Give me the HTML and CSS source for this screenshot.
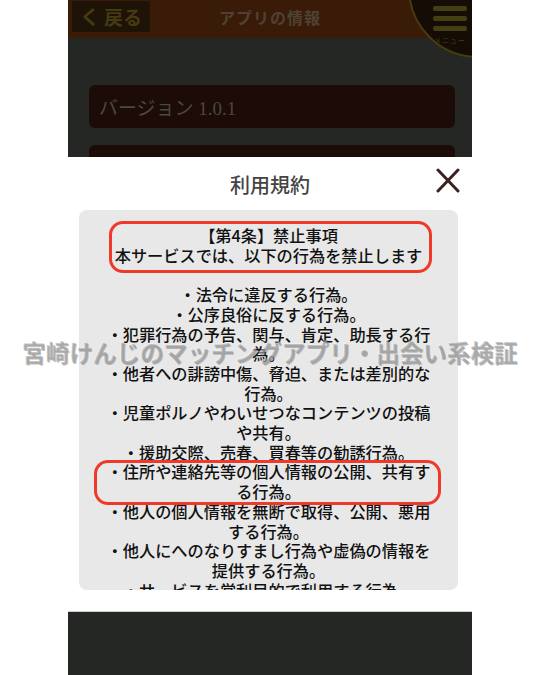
FILE: index.html
```html
<!DOCTYPE html>
<html lang="ja">
<head>
<meta charset="utf-8">
<title>利用規約</title>
<link rel="stylesheet" href="styles.css">
</head>
<body>
<div class="phone">
  <header class="appbar">
    <div class="back"><span class="chev">く</span><span>戻る</span></div>
    <div class="apptitle">アプリの情報</div>
    <div class="spacer"></div>
    <div class="menu">
      <span class="bar"></span>
      <span class="bar"></span>
      <span class="bar"></span>
      <span class="menu-label">メニュー</span>
    </div>
  </header>
  <main class="content">
    <div class="row">バージョン 1.0.1</div>
    <div class="row row-tall"></div>
  </main>

  <div class="modal">
    <div class="modal-head">
      <h2 class="modal-title">利用規約</h2>
      <button class="close" aria-label="閉じる">
        <svg width="24" height="25" viewBox="0 0 24 25"><path d="M2 2 L22 23 M22 2 L2 23" stroke="#3a2222" stroke-width="3" stroke-linecap="round" fill="none"/></svg>
      </button>
    </div>
    <div class="terms">
      <p class="lines">【第4条】禁止事項<br>本サービスでは、以下の行為を禁止します<br>&nbsp;<br>・法令に違反する行為。<br>・公序良俗に反する行為。<br>・犯罪行為の予告、関与、肯定、助長する行<br>為。<br>・他者への誹謗中傷、脅迫、または差別的な<br>行為。<br>・児童ポルノやわいせつなコンテンツの投稿<br>や共有。<br>・援助交際、売春、買春等の勧誘行為。<br>・住所や連絡先等の個人情報の公開、共有す<br>る行為。<br>・他人の個人情報を無断で取得、公開、悪用<br>する行為。<br>・他人にへのなりすまし行為や虚偽の情報を<br>提供する行為。<br>・サービスを営利目的で利用する行為。</p>
      <div class="mark mark-1"></div>
      <div class="mark mark-2"></div>
    </div>
  </div>
</div>
<div class="watermark">宮崎けんじのマッチングアプリ・出会い系検証</div>
</body>
</html>
```

FILE: styles.css
```css
* { box-sizing: border-box; }
html, body { margin: 0; padding: 0; }
body {
  background: #ffffff;
  width: 540px;
  height: 675px;
  overflow: hidden;
  position: relative;
  font-family: "Noto Sans CJK JP", "Noto Sans", sans-serif;
}
.phone {
  margin-left: 68px;
  width: 404px;
  height: 675px;
  background: #252725;
  position: relative;
  overflow: hidden;
}
.appbar {
  height: 38px;
  background: #391b07;
  display: grid;
  grid-template-columns: 1fr auto 1fr;
  align-items: center;
  position: relative;
}
.back {
  justify-self: start;
  margin-left: 4px;
  margin-top: -6px;
  width: 78px;
  height: 31px;
  background: #1e1307;
  border-radius: 2px;
  color: #453a12;
  font-size: 19px;
  display: flex;
  align-items: center;
  gap: 4px;
  padding-left: 8px;
  font-weight: bold;
}
.chev { font-size: 20px; }
.apptitle {
  color: #4f4234;
  font-size: 16px;
  font-weight: bold;
  letter-spacing: 1px;
  margin-top: -4px;
}
.menu {
  position: absolute;
  left: 340px;
  top: -82px;
  width: 140px;
  height: 140px;
  border-radius: 50%;
  background: #150d05;
  border: 2px solid #463c10;
  padding: 86px 0 0 23px;
  display: flex;
  flex-direction: column;
  gap: 5.5px;
}
.bar {
  display: block;
  width: 34px;
  height: 4.5px;
  border-radius: 2px;
  background: #463e13;
}
.menu-label {
  font-size: 7px;
  color: #463e13;
  margin-top: -1px;
  margin-left: 1px;
  letter-spacing: 1px;
}
.content {
  padding: 47px 17px 0 21px;
  display: flex;
  flex-direction: column;
  gap: 17px;
}
.row {
  height: 43px;
  background: #1c0b06;
  border-radius: 6px;
  color: #484846;
  font-size: 19px;
  display: flex;
  align-items: center;
  padding-left: 10px;
  font-family: "Liberation Serif", "Noto Sans CJK JP", serif;
}
.row-tall { height: 60px; }

.modal {
  position: absolute;
  left: 0;
  right: 0;
  top: 157px;
  height: 455px;
  background: #ffffff;
  border-bottom: 1px solid #cfcfcf;
  display: flex;
  flex-direction: column;
}
.modal-head {
  height: 53px;
  position: relative;
  display: flex;
  align-items: center;
  justify-content: center;
  padding-top: 3px;
}
.modal-title {
  margin: 0;
  font-size: 20px;
  font-weight: 500;
  color: #444444;
  line-height: 24px;
}
.close {
  position: absolute;
  right: 12px;
  top: 11px;
  width: 24px;
  height: 25px;
  padding: 0;
  border: 0;
  background: none;
  display: block;
}
.close svg { display: block; }
.terms {
  margin: 0 14px 0 11px;
  height: 380px;
  background: #e8e8e8;
  border-radius: 8px;
  overflow: hidden;
  position: relative;
  padding-top: 16px;
}
.lines {
  margin: 0;
  text-align: center;
  font-size: 16.2px;
  font-weight: 500;
  line-height: 19.7px;
  color: #111111;
  white-space: nowrap;
}
.mark {
  position: absolute;
  border: 3px solid #f03a29;
  border-radius: 14px;
}
.mark-1 { left: 30px; top: 11px; width: 323px; height: 52px; }
.mark-2 { left: 15px; top: 250px; width: 347px; height: 45px; }

.watermark {
  position: absolute;
  left: 22px;
  top: 337px;
  font-size: 23.6px;
  line-height: 30px;
  font-weight: bold;
  white-space: nowrap;
  color: rgba(150, 150, 150, 0.55);
  text-shadow: 1px 1px 0 rgba(110, 110, 110, 0.45), -1px -1px 0 rgba(255, 255, 255, 0.35);
}
```
